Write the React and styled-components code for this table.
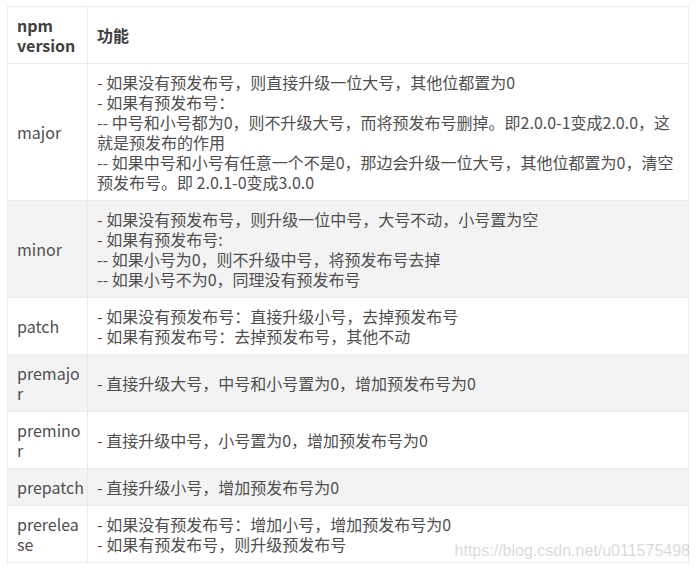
import React from 'react';
import styled, { createGlobalStyle } from 'styled-components';

const GlobalStyle = createGlobalStyle`
    body {
        margin: 0;
        background: #fff;
        font-family: "Noto Sans CJK SC", "Noto Sans", sans-serif;
    }
`;

const Page = styled.div`
    padding: 6px 0 0 7px;
`;

const Frame = styled.div`
    position: relative;
    width: 682px;
`;

const Table = styled.table`
    width: 682px;
    border-collapse: collapse;
    table-layout: fixed;
    font-size: 16px;
    line-height: 20px;
    color: #4f4f4f;
`;

const Row = styled.tr`
    background: ${props => props.shaded ? '#f3f3f3' : '#fff'};
`;

const Head = styled.th`
    box-sizing: border-box;
    border: 1px solid #ebebeb;
    padding: 8px 8px 8px 9px;
    text-align: left;
    vertical-align: middle;
    font-weight: 700;
    color: #3f3f3f;
    white-space: nowrap;
    width: ${props => props.w || 'auto'};
`;

const Cell = styled.td`
    border: 1px solid #ebebeb;
    padding: 8px 8px 8px 9px;
    vertical-align: middle;
    white-space: nowrap;
`;

const Watermark = styled.div`
    position: absolute;
    right: -1px;
    bottom: 3px;
    font-family: "Liberation Sans", Arial, sans-serif;
    font-size: 16px;
    line-height: 18px;
    color: rgba(170, 170, 170, 0.45);
    pointer-events: none;
`;

const rows = [
    {
        name: ['major'],
        lines: [
            '- 如果没有预发布号，则直接升级一位大号，其他位都置为0',
            '- 如果有预发布号：',
            '-- 中号和小号都为0，则不升级大号，而将预发布号删掉。即2.0.0-1变成2.0.0，这',
            '就是预发布的作用',
            '-- 如果中号和小号有任意一个不是0，那边会升级一位大号，其他位都置为0，清空',
            '预发布号。即 2.0.1-0变成3.0.0',
        ],
    },
    {
        name: ['minor'],
        lines: [
            '- 如果没有预发布号，则升级一位中号，大号不动，小号置为空',
            '- 如果有预发布号:',
            '-- 如果小号为0，则不升级中号，将预发布号去掉',
            '-- 如果小号不为0，同理没有预发布号',
        ],
    },
    {
        name: ['patch'],
        lines: [
            '- 如果没有预发布号：直接升级小号，去掉预发布号',
            '- 如果有预发布号：去掉预发布号，其他不动',
        ],
    },
    {
        name: ['premajo', 'r'],
        lines: ['- 直接升级大号，中号和小号置为0，增加预发布号为0'],
    },
    {
        name: ['premino', 'r'],
        lines: ['- 直接升级中号，小号置为0，增加预发布号为0'],
    },
    {
        name: ['prepatch'],
        lines: ['- 直接升级小号，增加预发布号为0'],
    },
    {
        name: ['prerelea', 'se'],
        lines: [
            '- 如果没有预发布号：增加小号，增加预发布号为0',
            '- 如果有预发布号，则升级预发布号',
        ],
    },
];

const Lines = ({ items }) => items.map((text, i) => (
    <React.Fragment key={i}>
        {i > 0 && <br />}
        {text}
    </React.Fragment>
));

const App = () => {
    return (
        <Page>
            <GlobalStyle />
            <Frame>
                <Table>
                    <thead>
                        <Row>
                            <Head w="80px">npm<br />version</Head>
                            <Head>功能</Head>
                        </Row>
                    </thead>
                    <tbody>
                        {rows.map((row, i) => (
                            <Row key={row.name.join('')} shaded={i % 2 === 1}>
                                <Cell><Lines items={row.name} /></Cell>
                                <Cell><Lines items={row.lines} /></Cell>
                            </Row>
                        ))}
                    </tbody>
                </Table>
                <Watermark>https://blog.csdn.net/u011575498</Watermark>
            </Frame>
        </Page>
    );
};

export default App;
